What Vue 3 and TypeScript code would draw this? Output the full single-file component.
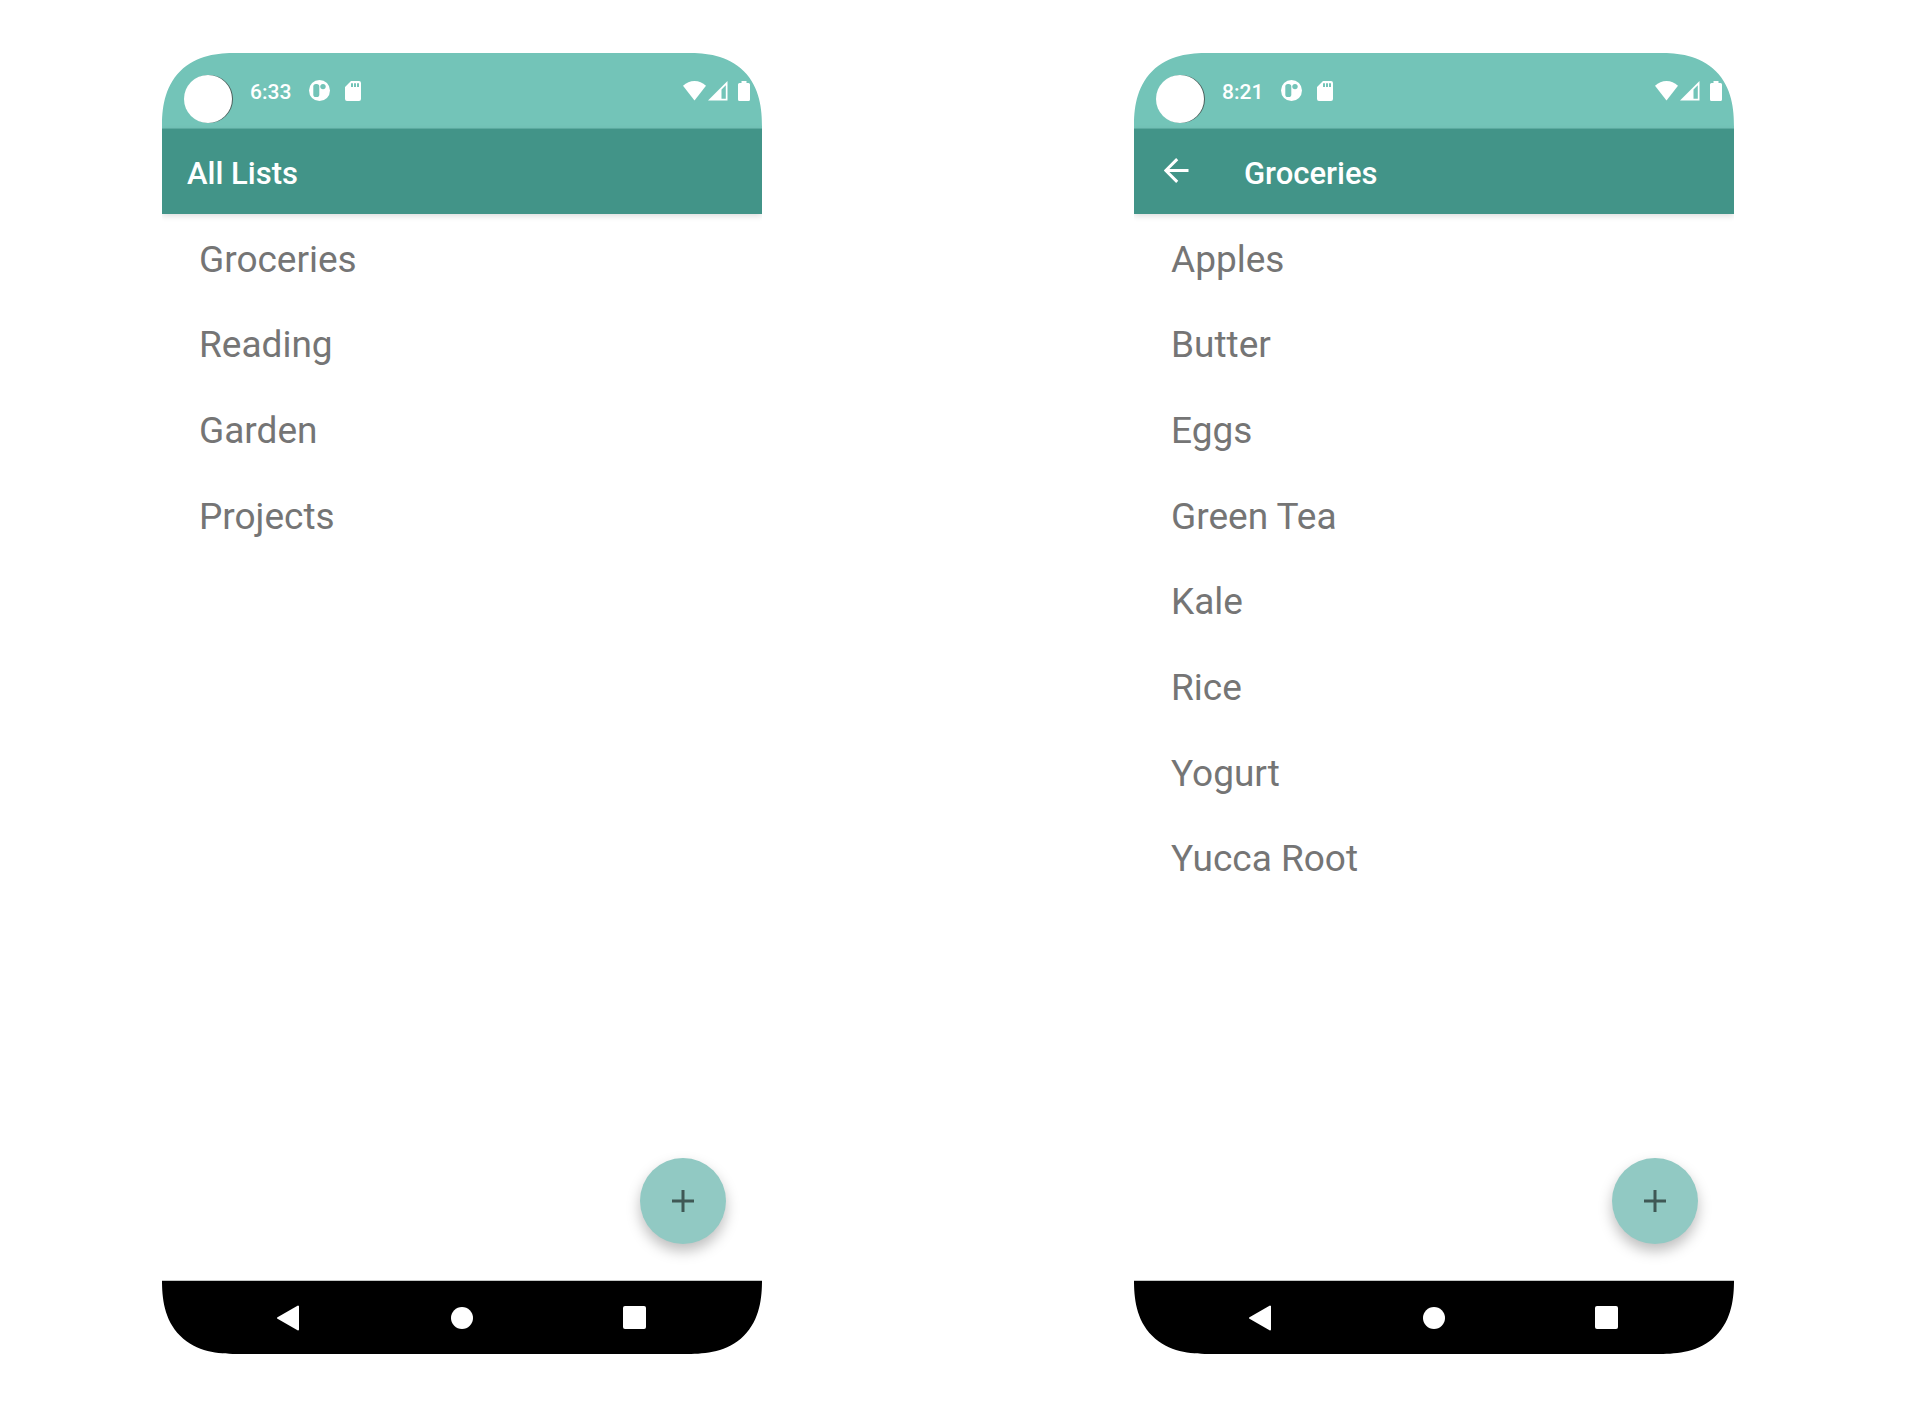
<script setup lang="ts">
interface Screen {
  title: string
  time: string
  back: boolean
  items: string[]
}

const screens: Screen[] = [
  {
    title: 'All Lists',
    time: '6:33',
    back: false,
    items: ['Groceries', 'Reading', 'Garden', 'Projects'],
  },
  {
    title: 'Groceries',
    time: '8:21',
    back: true,
    items: ['Apples', 'Butter', 'Eggs', 'Green Tea', 'Kale', 'Rice', 'Yogurt', 'Yucca Root'],
  },
]
</script>

<template>
  <main class="page">
    <section v-for="screen in screens" :key="screen.title" class="phone" :aria-label="screen.title">
      <div class="status">
        <span class="camera"></span>
        <time class="clock">{{ screen.time }}</time>
        <svg class="app-icon" viewBox="0 0 21 21" aria-hidden="true">
          <circle cx="10.5" cy="10.5" r="10.5" fill="#fff" />
          <rect x="4.3" y="4" width="6" height="13" rx="2.6" fill="#73c4b8" />
          <circle cx="14" cy="6.6" r="2.7" fill="#73c4b8" />
        </svg>
        <svg class="sd-icon" viewBox="0 0 16 20" aria-hidden="true">
          <path
            d="M6 0H14Q16 0 16 2V18Q16 20 14 20H2Q0 20 0 18V6ZM6 2.2V6H8V2.2ZM9 2.2V6H11V2.2ZM12 2.2V6H14V2.2Z"
            fill="#fff"
            fill-rule="evenodd"
          />
        </svg>
        <div class="signals">
          <svg width="23" height="20" viewBox="0 0 23 20" aria-hidden="true">
            <path d="M0 4.8Q5 0 11.5 0T23 4.8L11.5 19.5Z" fill="#fff" />
          </svg>
          <svg width="20" height="20" viewBox="0 0 20 20" aria-hidden="true">
            <path d="M0 19.5L19.5 0V19.5ZM13.5 8.5V17.7H17.8V4.3Z" fill="#fff" fill-rule="evenodd" />
          </svg>
          <svg class="battery" width="12" height="20" viewBox="0 0 12 20" aria-hidden="true">
            <path
              d="M3.5 0H8.5V2H10.5Q12 2 12 3.5V18.5Q12 20 10.5 20H1.5Q0 20 0 18.5V3.5Q0 2 1.5 2H3.5Z"
              fill="#fff"
            />
          </svg>
        </div>
      </div>

      <header class="toolbar">
        <button v-if="screen.back" class="back" type="button" aria-label="Back">
          <svg width="25" height="25" viewBox="0 0 25 25" aria-hidden="true">
            <path d="M24.5 12.5H2M13.2 1.1L1.8 12.5L13.2 23.9" fill="none" stroke="#fff" stroke-width="3" />
          </svg>
        </button>
        <h1>{{ screen.title }}</h1>
      </header>

      <div class="content">
        <ul>
          <li v-for="item in screen.items" :key="item">{{ item }}</li>
        </ul>
        <button class="fab" type="button" aria-label="Add">
          <svg width="22" height="22" viewBox="0 0 22 22" aria-hidden="true">
            <path d="M11 0V22M0 11H22" stroke="#3f5855" stroke-width="3" />
          </svg>
        </button>
      </div>

      <nav class="nav">
        <button type="button" aria-label="Back">
          <svg width="26" height="26" viewBox="0 0 26 26" aria-hidden="true">
            <path d="M1 13L21 1.5V24.5Z" fill="#fff" stroke="#fff" stroke-width="2" stroke-linejoin="round" />
          </svg>
        </button>
        <button type="button" aria-label="Home"><span class="dot"></span></button>
        <button type="button" aria-label="Recent"><span class="square"></span></button>
      </nav>
    </section>
  </main>
</template>

<style>
body {
  margin: 0;
  background: #fff;
}
</style>

<style scoped>
.page {
  box-sizing: border-box;
  display: flex;
  justify-content: space-between;
  align-items: stretch;
  min-height: 100vh;
  padding: 53px 180px 64px 162px;
  font-family: Roboto, sans-serif;
}

.phone {
  display: flex;
  flex-direction: column;
  flex: 0 1 600px;
  border-radius: 64px;
  overflow: hidden;
  background: #fff;
}

@supports (corner-shape: superellipse(1.3)) {
  .phone {
    border-radius: 74px;
    corner-shape: superellipse(1.3);
  }
}

.status {
  display: flex;
  align-items: center;
  box-sizing: border-box;
  height: 76px;
  padding: 0 12px 0 22px;
  background: #73c4b8;
  border-bottom: 1px solid #5fb0a5;
}

.camera {
  width: 48px;
  height: 48px;
  margin-top: 16px;
  border-radius: 50%;
  background: #fff;
  box-shadow: 1px 0 0 #4d5f5c;
}

.clock {
  width: 58px;
  margin: 2px 0 0 18px;
  color: #fff;
  font-size: 21px;
  line-height: 26px;
  font-weight: 500;
}

.app-icon {
  width: 21px;
  height: 21px;
  margin-left: 1px;
}

.sd-icon {
  width: 16px;
  height: 20px;
  margin-left: 15px;
}

.signals {
  display: flex;
  gap: 2px;
  margin-left: auto;
}

.battery {
  margin-left: 8px;
}

.toolbar {
  position: relative;
  display: flex;
  align-items: center;
  height: 85px;
  padding-left: 25px;
  background: #429488;
  box-shadow: 0 2px 6px rgba(0, 0, 0, 0.14);
}

h1 {
  margin: 4px 0 0;
  color: #fff;
  font-size: 31px;
  line-height: 36px;
  font-weight: 500;
}

button {
  display: flex;
  align-items: center;
  justify-content: center;
  padding: 0;
  border: 0;
  background: none;
  cursor: pointer;
}

.back {
  width: 34px;
  height: 36px;
  margin: 0 51px 2px 0;
}

.content {
  display: flex;
  flex-direction: column;
  flex: 1;
}

ul {
  display: grid;
  grid-template-rows: repeat(8, 1fr);
  min-height: 685px;
  margin: 0;
  padding: 3px 37px 0;
  list-style: none;
}

li {
  display: flex;
  align-items: center;
  color: #757575;
  font-size: 37px;
  line-height: 44px;
}

.fab {
  width: 86px;
  height: 86px;
  margin: auto 36px 36px auto;
  border-radius: 50%;
  background: #91c9c3;
  box-shadow: 0 7px 14px rgba(0, 0, 0, 0.26);
}

.nav {
  display: flex;
  justify-content: center;
  align-items: center;
  gap: 112px;
  height: 73px;
  border-top: 1px solid #c4c6c5;
  background: #000;
  background-clip: padding-box;
}

.nav button {
  width: 60px;
  height: 48px;
}

.dot {
  width: 22px;
  height: 22px;
  border-radius: 50%;
  background: #fff;
}

.square {
  width: 23px;
  height: 23px;
  border-radius: 2px;
  background: #fff;
}
</style>
